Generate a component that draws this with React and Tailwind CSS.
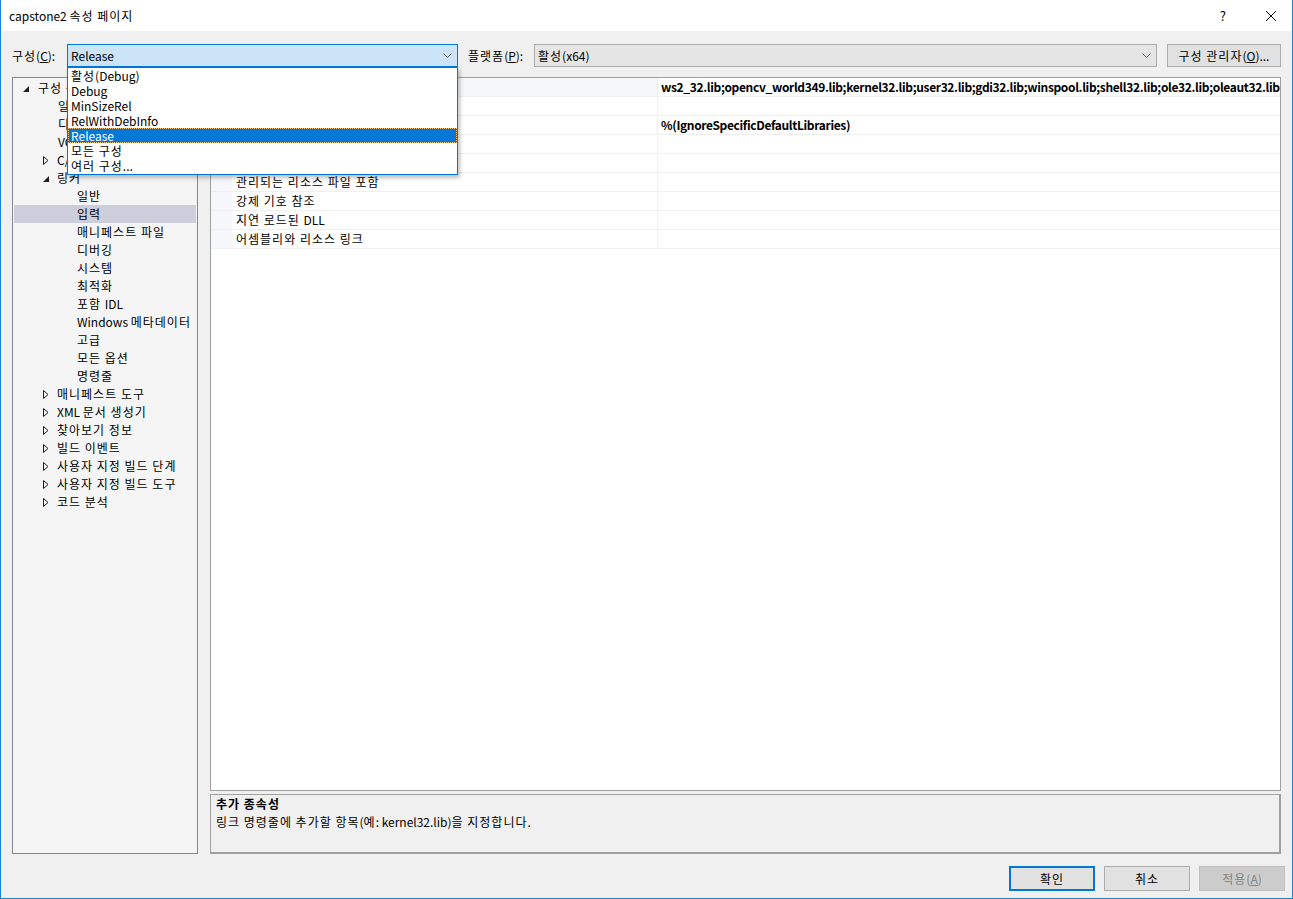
import { useState } from 'react'

const font = "font-['Noto_Sans_CJK_KR',sans-serif]"

const tree = [
  { text: '구성 속성', level: 0, arrow: 'open' },
  { text: '일반', level: 1 },
  { text: '디버깅', level: 1 },
  { text: 'VC++ 디렉터리', level: 1 },
  { text: 'C/C++', level: 1, arrow: 'closed' },
  { text: '링커', level: 1, arrow: 'open' },
  { text: '일반', level: 2 },
  { text: '입력', level: 2, selected: true },
  { text: '매니페스트 파일', level: 2 },
  { text: '디버깅', level: 2 },
  { text: '시스템', level: 2 },
  { text: '최적화', level: 2 },
  { text: '포함 IDL', level: 2 },
  { text: 'Windows 메타데이터', level: 2 },
  { text: '고급', level: 2 },
  { text: '모든 옵션', level: 2 },
  { text: '명령줄', level: 2 },
  { text: '매니페스트 도구', level: 1, arrow: 'closed' },
  { text: 'XML 문서 생성기', level: 1, arrow: 'closed' },
  { text: '찾아보기 정보', level: 1, arrow: 'closed' },
  { text: '빌드 이벤트', level: 1, arrow: 'closed' },
  { text: '사용자 지정 빌드 단계', level: 1, arrow: 'closed' },
  { text: '사용자 지정 빌드 도구', level: 1, arrow: 'closed' },
  { text: '코드 분석', level: 1, arrow: 'closed' },
]

const rows = [
  ['추가 종속성', 'ws2_32.lib;opencv_world349.lib;kernel32.lib;user32.lib;gdi32.lib;winspool.lib;shell32.lib;ole32.lib;oleaut32.lib;uuid.lib;comdlg32.lib;advapi32.lib'],
  ['모든 기본 라이브러리 무시', ''],
  ['특정 기본 라이브러리 무시', '%(IgnoreSpecificDefaultLibraries)'],
  ['모듈 정의 파일', ''],
  ['모듈을 어셈블리에 추가', ''],
  ['관리되는 리소스 파일 포함', ''],
  ['강제 기호 참조', ''],
  ['지연 로드된 DLL', ''],
  ['어셈블리와 리소스 링크', ''],
]

const configs = ['활성(Debug)', 'Debug', 'MinSizeRel', 'RelWithDebInfo', 'Release', '모든 구성', '여러 구성...']

// Hangul in Malgun Gothic runs wider than Noto CJK, so widen hangul runs a bit
function K({ children }) {
  const parts = String(children).split(/([\uAC00-\uD7A3][\uAC00-\uD7A3 ]*)/)
  return parts.map((p, i) =>
    /[\uAC00-\uD7A3]/.test(p) ? (
      <span key={i} className="tracking-[1px]">{p}</span>
    ) : (
      p
    )
  )
}

function Chevron() {
  return (
    <svg width="9" height="5" viewBox="0 0 9 5" className="shrink-0">
      <path d="M0.5 0.5 L4.5 4.5 L8.5 0.5" fill="none" stroke="#606060" strokeWidth="1" />
    </svg>
  )
}

function Arrow({ kind }) {
  if (kind === 'open') {
    return (
      <svg width="6" height="6" viewBox="0 0 6 6">
        <path d="M6 0 L6 6 L0 6 Z" fill="#1e1e1e" />
      </svg>
    )
  }
  return (
    <svg width="6" height="9" viewBox="0 0 6 9">
      <path d="M0.5 0.5 L5 4.5 L0.5 8.5 Z" fill="none" stroke="#1e1e1e" strokeWidth="1" />
    </svg>
  )
}

function TreeRow({ item }) {
  const pad = item.level === 0 ? 'pl-[9px]' : item.level === 1 ? (item.arrow ? 'pl-[29px]' : 'pl-[44px]') : 'pl-[63px]'
  return (
    <div className={`flex h-[18px] items-center whitespace-nowrap ${pad} ${item.selected ? 'bg-[#cccedb]' : ''}`}>
      {item.arrow && (
        <span className={`flex ${item.level === 0 ? 'w-[15px] pt-[1px]' : item.arrow === 'open' ? 'w-[14px] pt-[1px]' : 'w-[14px]'}`}>
          <Arrow kind={item.arrow} />
        </span>
      )}
      <span>
        <K>{item.text}</K>
      </span>
    </div>
  )
}

export default function App() {
  const [config] = useState('Release')

  return (
    <div className={`flex h-[899px] w-[1293px] flex-col overflow-hidden border-x border-b border-[#1883d7] bg-[#f0f0f0] text-[12px] leading-[18px] text-black ${font}`}>
      <header className="flex h-[31px] shrink-0 items-center bg-white pl-[8px]">
        <span className="flex-1">
          <K>capstone2 속성 페이지</K>
        </span>
        <span className="mr-[40px] text-[13px]">?</span>
        <svg width="10" height="10" viewBox="0 0 10 10" className="mr-[16px]">
          <path d="M0 0 L10 10 M10 0 L0 10" stroke="#111" strokeWidth="1" />
        </svg>
      </header>

      <div className="flex flex-1 flex-col px-[11px] pt-[13px]">
        <div className="flex h-[23px] items-center">
          <span className="w-[55px]">
            <K>구성</K>(<u>C</u>):
          </span>
          <div className="relative h-[23px] w-[391px]">
            <div className="flex h-full items-center border border-[#0078d7] bg-[#cce4f7] pl-[3px] pr-[5px]">
              <span className="flex-1">{config}</span>
              <Chevron />
            </div>
            <div className="absolute left-0 top-[23px] z-10 h-[108px] w-[391px] border border-[#0078d7] bg-white leading-[15px] shadow-[2px_3px_4px_rgba(0,0,0,0.25)]">
              {configs.map((c) => (
                <div
                  key={c}
                  className={`h-[15px] pl-[3px] ${c === config ? 'bg-[#0078d7] text-white outline-1 -outline-offset-1 outline-dotted outline-[#f0c080]' : ''}`}
                >
                  <K>{c}</K>
                </div>
              ))}
            </div>
          </div>
          <span className="ml-[10px] w-[66px]">
            <K>플랫폼</K>(<u>P</u>):
          </span>
          <div className="flex h-full w-[623px] items-center border border-[#adadad] bg-[#e5e5e5] pl-[3px] pr-[5px]">
            <span className="flex-1">
              <K>활성</K>(x64)
            </span>
            <Chevron />
          </div>
          <button className="ml-[10px] h-full w-[114px] border border-[#adadad] bg-[#e1e1e1]">
            <K>구성 관리자</K>(<u>O</u>)...
          </button>
        </div>

        <div className="mt-[10px] flex h-[777px] gap-[12px]">
          <div className="w-[186px] shrink-0 overflow-hidden border border-[#828790] bg-[#f5f5f5] px-[1px] pt-[1px]">
            {tree.map((item, i) => (
              <TreeRow key={i} item={item} />
            ))}
          </div>

          <div className="flex min-w-0 flex-1 flex-col">
            <div className="h-[714px] overflow-hidden border border-[#a0a0a0] bg-white">
              {rows.map(([name, value], i) => (
                <div key={i} className="flex h-[19px] border-b border-[#f0f0f0]">
                  <div className="w-[21px] shrink-0 bg-[#f5f7fa]" />
                  <div className={`w-[426px] shrink-0 border-r border-[#f0f0f0] pl-[4px] ${i === 0 ? 'bg-[#f5f7fa]' : ''}`}>
                    <K>{name}</K>
                  </div>
                  <div className="min-w-0 flex-1 overflow-hidden whitespace-nowrap pl-[3px] font-bold tracking-[-0.35px]">{value}</div>
                </div>
              ))}
            </div>
            <div className="mt-[3px] h-[60px] border border-b-2 border-r-2 border-[#a0a0a0] bg-[#f0f0f0] pl-[5px]">
              <div className="font-bold">
                <K>추가 종속성</K>
              </div>
              <div>
                <K>링크 명령줄에 추가할 항목(예: kernel32.lib)을 지정합니다.</K>
              </div>
            </div>
          </div>
        </div>

        <div className="mr-[-4px] mt-[12px] flex justify-end gap-[9px]">
          <button className="h-[25px] w-[86px] border-2 border-[#0078d7] bg-[#e1e1e1]">
            <K>확인</K>
          </button>
          <button className="h-[25px] w-[86px] border border-[#adadad] bg-[#e1e1e1]">
            <K>취소</K>
          </button>
          <button className="h-[25px] w-[86px] border border-[#bfbfbf] bg-[#cccccc] text-[#838383]">
            <K>적용</K>(<u>A</u>)
          </button>
        </div>
      </div>
    </div>
  )
}
